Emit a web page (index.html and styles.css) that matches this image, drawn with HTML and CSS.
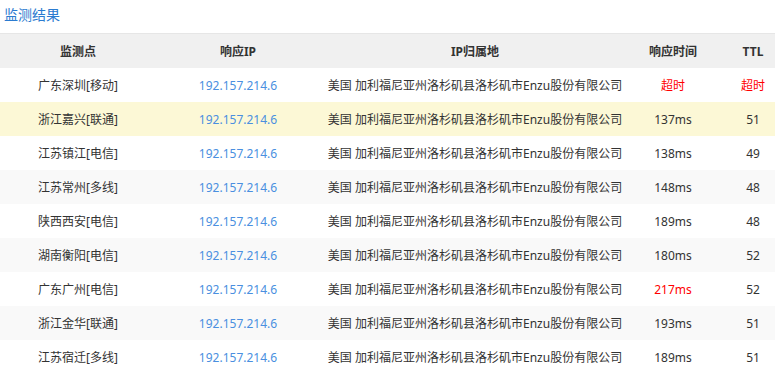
FILE: index.html
```html
<!DOCTYPE html>
<html lang="zh-CN">
<head>
<meta charset="utf-8">
<title>监测结果</title>
<link rel="stylesheet" href="styles.css">
</head>
<body>
<div class="panel">
  <div class="title">监测结果</div>
  <div class="table">
    <div class="row head">
      <div>监测点</div><div>响应IP</div><div>IP归属地</div><div>响应时间</div><div>TTL</div>
    </div>
    <div class="row">
      <div>广东深圳[移动]</div><div class="ip">192.157.214.6</div><div>美国 加利福尼亚州洛杉矶县洛杉矶市Enzu股份有限公司</div><div class="red">超时</div><div class="red">超时</div>
    </div>
    <div class="row hl">
      <div>浙江嘉兴[联通]</div><div class="ip">192.157.214.6</div><div>美国 加利福尼亚州洛杉矶县洛杉矶市Enzu股份有限公司</div><div>137ms</div><div>51</div>
    </div>
    <div class="row">
      <div>江苏镇江[电信]</div><div class="ip">192.157.214.6</div><div>美国 加利福尼亚州洛杉矶县洛杉矶市Enzu股份有限公司</div><div>138ms</div><div>49</div>
    </div>
    <div class="row alt">
      <div>江苏常州[多线]</div><div class="ip">192.157.214.6</div><div>美国 加利福尼亚州洛杉矶县洛杉矶市Enzu股份有限公司</div><div>148ms</div><div>48</div>
    </div>
    <div class="row">
      <div>陕西西安[电信]</div><div class="ip">192.157.214.6</div><div>美国 加利福尼亚州洛杉矶县洛杉矶市Enzu股份有限公司</div><div>189ms</div><div>48</div>
    </div>
    <div class="row alt">
      <div>湖南衡阳[电信]</div><div class="ip">192.157.214.6</div><div>美国 加利福尼亚州洛杉矶县洛杉矶市Enzu股份有限公司</div><div>180ms</div><div>52</div>
    </div>
    <div class="row">
      <div>广东广州[电信]</div><div class="ip">192.157.214.6</div><div>美国 加利福尼亚州洛杉矶县洛杉矶市Enzu股份有限公司</div><div class="red">217ms</div><div>52</div>
    </div>
    <div class="row alt">
      <div>浙江金华[联通]</div><div class="ip">192.157.214.6</div><div>美国 加利福尼亚州洛杉矶县洛杉矶市Enzu股份有限公司</div><div>193ms</div><div>51</div>
    </div>
    <div class="row">
      <div>江苏宿迁[多线]</div><div class="ip">192.157.214.6</div><div>美国 加利福尼亚州洛杉矶县洛杉矶市Enzu股份有限公司</div><div>189ms</div><div>51</div>
    </div>
  </div>
</div>
</body>
</html>
```
FILE: styles.css
```css
html, body {
  margin: 0;
  padding: 0;
  overflow: hidden;
  background: #fff;
}
body {
  font-family: "Noto Sans", "Noto Sans CJK SC", sans-serif;
  font-size: 12px;
  color: #333;
}
.panel {
  width: 790px;
}
.title {
  height: 33px;
  line-height: 30px;
  padding-left: 4px;
  font-size: 14px;
  color: #2b7bd0;
  border-bottom: 1px solid #e6e6e6;
}
.row {
  display: grid;
  grid-template-columns: 156px 164px 310px 86px 74px;
  height: 34px;
  align-items: center;
  justify-items: center;
  white-space: nowrap;
}
.row.head {
  background: #f0f0f0;
  font-weight: bold;
  color: #333;
}
.row.hl {
  background: #fcf8d6;
}
.row.alt {
  background: #f9f9f9;
}
.ip {
  color: #4a8fe0;
}
.red {
  color: #ff0000;
}
```
